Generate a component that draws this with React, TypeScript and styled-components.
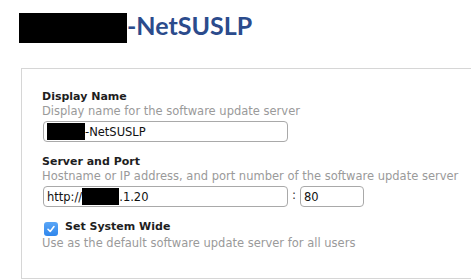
import React from 'react';
import styled, { createGlobalStyle } from 'styled-components';

const GlobalStyle = createGlobalStyle`
  html, body {
    margin: 0;
    padding: 0;
    background: #ffffff;
  }
  body {
    font-family: "DejaVu Sans", Verdana, sans-serif;
    overflow: hidden;
  }
`;

const Page = styled.div`
  width: 471px;
  height: 280px;
  overflow: hidden;
  padding: 10px 0 0 19px;
  box-sizing: border-box;
`;

const Title = styled.h1`
  display: flex;
  align-items: flex-start;
  height: 30px;
  margin: 0;
  font-family: Lato, "Open Sans", sans-serif;
  font-weight: 700;
  font-size: 25px;
  line-height: 30px;
  color: #2b4b8c;
`;

const Redacted = styled.span<{ $w: number; $h: number; $top?: number }>`
  display: inline-block;
  flex: none;
  width: ${(p) => p.$w}px;
  height: ${(p) => p.$h}px;
  margin-top: ${(p) => p.$top ?? 0}px;
  background: #000;
`;

const Panel = styled.section`
  margin: 28px -20px 0 2px;
  border: 1px solid #d6d6d6;
  padding: 20px 20px 27px 20px;
`;

const Field = styled.div`
  display: flex;
  flex-direction: column;
  & + & {
    margin-top: 12px;
  }
`;

const Label = styled.label`
  font-size: 11px;
  line-height: 15px;
  font-weight: 700;
  color: #1e1e1e;
`;

const Help = styled.div`
  font-size: 11.5px;
  line-height: 15px;
  color: #9a9a9a;
`;

const InputRow = styled.div`
  display: flex;
  align-items: center;
  margin-top: 2px;
  padding-left: 1px;
`;

const TextBox = styled.div<{ $w: number }>`
  display: flex;
  align-items: center;
  box-sizing: border-box;
  width: ${(p) => p.$w}px;
  height: 21px;
  padding: 0 3px;
  border: 1px solid #a9a9a9;
  border-radius: 4px;
  font-size: 11.5px;
  color: #111;
  white-space: nowrap;
  overflow: hidden;
`;

const Colon = styled.span`
  margin: 0 4px;
  font-size: 12px;
  color: #333;
  transform: translateY(-2px);
`;

const CheckRow = styled.div`
  display: flex;
  align-items: flex-start;
  gap: 7px;
  padding-left: 2px;
`;

const CheckBox = styled.span`
  display: inline-flex;
  align-items: center;
  justify-content: center;
  width: 14px;
  height: 14px;
  margin-top: 3px;
  border-radius: 3px;
  background: linear-gradient(#5aa6f6, #2f86ec);
  flex: none;
`;

export default function App() {
  return (
    <>
      <GlobalStyle />
      <Page>
        <Title>
          <Redacted $w={108} $h={30} $top={3} />
          -NetSUSLP
        </Title>
        <Panel>
          <Field>
            <Label>Display Name</Label>
            <Help>Display name for the software update server</Help>
            <InputRow>
              <TextBox $w={245}>
                <Redacted $w={38} $h={17} />
                -NetSUSLP
              </TextBox>
            </InputRow>
          </Field>
          <Field>
            <Label>Server and Port</Label>
            <Help>Hostname or IP address, and port number of the software update server</Help>
            <InputRow>
              <TextBox $w={245}>
                http://
                <Redacted $w={37} $h={17} />
                .1.20
              </TextBox>
              <Colon>:</Colon>
              <TextBox $w={64}>80</TextBox>
            </InputRow>
          </Field>
          <Field>
            <CheckRow>
              <CheckBox>
                <svg width="10" height="10" viewBox="0 0 10 10">
                  <path d="M2 5.3 L4.2 7.5 L8 2.6" fill="none" stroke="#fff" strokeWidth="1.6" strokeLinecap="round" strokeLinejoin="round" />
                </svg>
              </CheckBox>
              <Label>Set System Wide</Label>
            </CheckRow>
            <Help>Use as the default software update server for all users</Help>
          </Field>
        </Panel>
      </Page>
    </>
  );
}
